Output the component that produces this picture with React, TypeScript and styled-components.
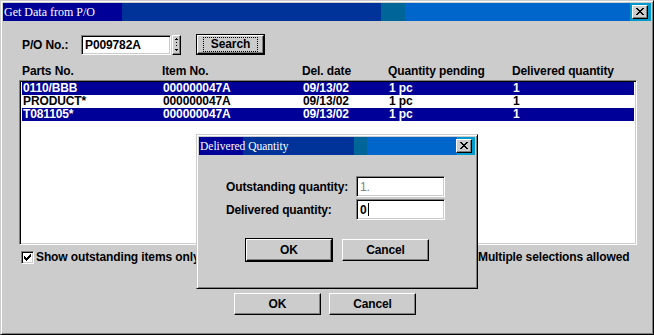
import styled, { createGlobalStyle } from 'styled-components';

const FACE = '#cccccc';
const SHADOW = '#808080';
const HILITE = '#000099';

const GlobalStyle = createGlobalStyle`
  html, body { margin: 0; padding: 0; background: ${FACE}; }
  body { font-family: "Liberation Sans", Arial, sans-serif; }
`;

type Band = [string, number];

const bands = (segs: Band[]) => {
  let x = 0;
  const parts = segs.map(([c, w]) => {
    const s = `${c} ${x}px ${x + w}px`;
    x += w;
    return s;
  });
  return `linear-gradient(to right, ${parts.join(', ')})`;
};

const Frame = styled.div<{ $w: number; $h: number }>`
  box-sizing: border-box;
  width: ${({ $w }) => $w}px;
  height: ${({ $h }) => $h}px;
  background: ${FACE};
  border: 1px solid;
  border-color: ${FACE} #000 #000 ${FACE};
  box-shadow: inset 1px 1px #fff, inset -1px -1px ${SHADOW};
  padding: 2px;
  display: flex;
  flex-direction: column;
  font: bold 12px "Liberation Sans", Arial, sans-serif;
  letter-spacing: -0.12px;
  color: #000;
`;

const Window = styled(Frame)`
  position: relative;
`;

const Dialog = styled(Frame)`
  position: absolute;
  left: 195px;
  top: 133px;
`;

const TitleBar = styled.div<{ $bands: string }>`
  height: 18px;
  flex: none;
  display: flex;
  align-items: center;
  justify-content: space-between;
  padding: 0 3px 0 1px;
  background: ${({ $bands }) => $bands};
`;

const TitleText = styled.span<{ $size: number }>`
  font: normal ${({ $size }) => $size}px "Liberation Serif", "Times New Roman", serif;
  letter-spacing: 0;
  color: #fff;
  white-space: nowrap;
`;

const CloseButton = styled.div`
  box-sizing: border-box;
  width: 16px;
  height: 14px;
  background: ${FACE};
  border: 1px solid;
  border-color: #fff #000 #000 #fff;
  box-shadow: inset -1px -1px ${SHADOW};
  display: flex;
  align-items: center;
  justify-content: center;
  padding: 0 1px 1px 0;
`;

const Body = styled.div`
  display: flex;
  flex-direction: column;
  padding: 13px 14px 0 16px;
`;

const PoRow = styled.div`
  display: flex;
  align-items: center;
  height: 21px;
`;

const PoLabel = styled.span`
  width: 59px;
  margin-left: 3px;
`;

const Field = styled.div<{ $w: number; $h: number; $muted?: boolean }>`
  box-sizing: border-box;
  width: ${({ $w }) => $w}px;
  height: ${({ $h }) => $h}px;
  background: #fff;
  border: 1px solid;
  border-color: ${SHADOW} #fff #fff ${SHADOW};
  box-shadow: inset 1px 1px #000, inset -1px -1px ${FACE};
  padding: 0 3px;
  display: flex;
  align-items: center;
  color: ${({ $muted }) => ($muted ? SHADOW : '#000')};
  font-weight: ${({ $muted }) => ($muted ? 'normal' : 'bold')};
`;

const Spinner = styled.div`
  box-sizing: border-box;
  width: 9px;
  height: 20px;
  margin-left: 1px;
  background: ${FACE};
  border: 1px solid;
  border-color: #fff #000 #000 #fff;
  box-shadow: inset -1px -1px ${SHADOW};
  display: flex;
  justify-content: center;
  padding-top: 2px;
`;

const Button = styled.div<{ $w: number; $h?: number; $default?: boolean }>`
  box-sizing: border-box;
  width: ${({ $w }) => $w}px;
  height: ${({ $h }) => $h ?? 22}px;
  background: ${FACE};
  border: 1px solid;
  border-color: #fff #000 #000 #fff;
  box-shadow: inset -1px -1px ${SHADOW};
  outline: ${({ $default }) => ($default ? '1px solid #000' : 'none')};
  display: flex;
  align-items: center;
  justify-content: center;
  font-weight: bold;
`;

const FocusLabel = styled.span`
  border: 1px dotted #000;
  padding: 0 7px;
  line-height: 13px;
`;

const SearchButton = styled(Button)`
  margin-left: 16px;
`;

const Columns = styled.div`
  display: grid;
  grid-template-columns: 140px 140px 86px 124px 1fr;
  height: 13px;
  line-height: 13px;
  white-space: nowrap;
`;

const HeaderRow = styled(Columns)`
  margin-top: 10px;
  padding-left: 3px;
`;

const ListBox = styled.div`
  box-sizing: border-box;
  margin-top: 2px;
  height: 165px;
  background: #fff;
  border: 1px solid;
  border-color: ${SHADOW} #fff #fff ${SHADOW};
  box-shadow: inset 1px 1px #000, inset -1px -1px ${FACE};
  padding: 1px 2px 2px 2px;
`;

const ListRow = styled(Columns)<{ $selected?: boolean }>`
  padding-left: 1px;
  background: ${({ $selected }) => ($selected ? HILITE : '#fff')};
  color: ${({ $selected }) => ($selected ? '#fff' : '#000')};
`;

const CheckRow = styled.div`
  display: grid;
  grid-template-columns: 442px 1fr;
  margin-top: 6px;
  padding-left: 2px;
  height: 13px;
`;

const CheckItem = styled.label`
  display: flex;
  align-items: center;
  gap: 2px;
  white-space: nowrap;
  line-height: 13px;
`;

const CheckBox = styled.span`
  box-sizing: border-box;
  width: 13px;
  height: 13px;
  background: #fff;
  border: 1px solid;
  border-color: ${SHADOW} #fff #fff ${SHADOW};
  box-shadow: inset 1px 1px #000, inset -1px -1px ${FACE};
  display: flex;
  align-items: center;
  justify-content: center;
`;

const ButtonRow = styled.div<{ $gap: number }>`
  display: flex;
  gap: ${({ $gap }) => $gap}px;
`;

const MainButtons = styled(ButtonRow)`
  margin-top: 29px;
  justify-content: center;
  padding-right: 6px;
`;

const DialogForm = styled.div`
  display: grid;
  grid-template-columns: 130px 89px;
  row-gap: 2px;
  margin-top: 21px;
  padding-left: 27px;
  align-items: center;
`;

const DialogButtons = styled(ButtonRow)`
  margin-top: 19px;
  padding-left: 47px;
`;

const Caret = styled.span`
  display: inline-block;
  width: 1px;
  height: 13px;
  background: #000;
  margin-left: 1px;
`;

const PixelIcon = ({ rows, color = '#000' }: { rows: string[]; color?: string }) => (
  <svg width={rows[0].length} height={rows.length} shapeRendering="crispEdges" style={{ display: 'block' }}>
    {rows.flatMap((r, y) =>
      r.split('').map((c, x) =>
        c === 'X' ? <rect key={`${x}-${y}`} x={x} y={y} width={1} height={1} fill={color} /> : null
      )
    )}
  </svg>
);

const CLOSE = ['XX....XX', '.XX..XX.', '..XXXX..', '...XX...', '..XXXX..', '.XX..XX.', 'XX....XX'];
const CHECK = ['......X', '.....XX', 'X...XXX', 'XX.XXX.', 'XXXXX..', '.XXX...', '..X....'];
const SPIN = ['..X..', '.XXX.', '.....', '.....', '..X..', '.....', '.....', '..X..', '.....', '.....', '.....', '.XXX.', '..X..'];

const rows = [
  { part: '0110/BBB', item: '000000047A', date: '09/13/02', pending: '1 pc', delivered: '1', selected: true },
  { part: 'PRODUCT*', item: '000000047A', date: '09/13/02', pending: '1 pc', delivered: '1', selected: false },
  { part: 'T081105*', item: '000000047A', date: '09/13/02', pending: '1 pc', delivered: '1', selected: true },
];

const mainBands = bands([
  [HILITE, 119],
  ['#003399', 259],
  ['#006699', 24],
  ['#0066cc', 225],
  ['#0099cc', 100],
]);

const dialogBands = bands([
  [HILITE, 44],
  ['#003399', 111],
  ['#006699', 13],
  ['#0066cc', 90],
  ['#0099cc', 100],
]);

const App = () => (
  <>
    <GlobalStyle />
    <Window $w={654} $h={335}>
      <TitleBar $bands={mainBands}>
        <TitleText $size={12}>Get Data from P/O</TitleText>
        <CloseButton>
          <PixelIcon rows={CLOSE} />
        </CloseButton>
      </TitleBar>
      <Body>
        <PoRow>
          <PoLabel>P/O No.:</PoLabel>
          <Field $w={90} $h={20}>P009782A</Field>
          <Spinner>
            <PixelIcon rows={SPIN} />
          </Spinner>
          <SearchButton $w={67} $h={19} $default>
            <FocusLabel>Search</FocusLabel>
          </SearchButton>
        </PoRow>
        <HeaderRow>
          <span>Parts No.</span>
          <span>Item No.</span>
          <span>Del. date</span>
          <span>Quantity pending</span>
          <span>Delivered quantity</span>
        </HeaderRow>
        <ListBox>
          {rows.map((r) => (
            <ListRow key={r.part} $selected={r.selected}>
              <span>{r.part}</span>
              <span>{r.item}</span>
              <span>{r.date}</span>
              <span>{r.pending}</span>
              <span>{r.delivered}</span>
            </ListRow>
          ))}
        </ListBox>
        <CheckRow>
          <CheckItem>
            <CheckBox>
              <PixelIcon rows={CHECK} />
            </CheckBox>
            Show outstanding items only
          </CheckItem>
          <CheckItem>
            <CheckBox />
            Multiple selections allowed
          </CheckItem>
        </CheckRow>
        <MainButtons $gap={8}>
          <Button $w={87}>OK</Button>
          <Button $w={87}>Cancel</Button>
        </MainButtons>
      </Body>

      <Dialog $w={282} $h={155}>
        <TitleBar $bands={dialogBands}>
          <TitleText $size={11.5}>Delivered Quantity</TitleText>
          <CloseButton>
            <PixelIcon rows={CLOSE} />
          </CloseButton>
        </TitleBar>
        <DialogForm>
          <span>Outstanding quantity:</span>
          <Field $w={89} $h={21} $muted>
            1.
          </Field>
          <span>Delivered quantity:</span>
          <Field $w={89} $h={21}>
            0<Caret />
          </Field>
        </DialogForm>
        <DialogButtons $gap={10}>
          <Button $w={86} $default>
            OK
          </Button>
          <Button $w={87}>Cancel</Button>
        </DialogButtons>
      </Dialog>
    </Window>
  </>
);

export default App;
